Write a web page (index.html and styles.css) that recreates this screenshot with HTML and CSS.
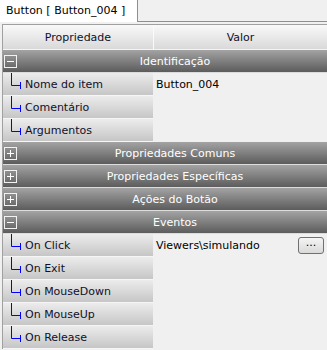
FILE: index.html
```html
<html>
	<head>
		<title>Button [ Button_004 ]</title>
		<link rel="stylesheet" href="styles.css">
	</head>
	<body>
		<div class="tabs">
			<div class="tab">Button [ Button_004 ]</div>
		</div>
		<div class="panel">
			<div class="grid">
				<div class="head">
					<div class="head-name">Propriedade</div>
					<div class="head-val">Valor</div>
				</div>

				<div class="section">
					<svg class="box" width="13" height="13" viewBox="0 0 13 13"><rect x="0.5" y="0.5" width="12" height="12" fill="none" stroke="#f2f2f2"/><path d="M3 6.5H10" stroke="#fff"/></svg>
					<span class="section-label">Identificação</span>
				</div>
				<div class="row">
					<div class="name"><svg class="tree" width="22" height="23" viewBox="0 0 22 23"><path d="M8.5 0V12.5H17M17.5 9V16" fill="none" stroke="#0000ff"/></svg>Nome do item</div>
					<div class="val">Button_004</div>
				</div>
				<div class="row">
					<div class="name"><svg class="tree" width="22" height="23" viewBox="0 0 22 23"><path d="M8.5 0V12.5H17M17.5 9V16" fill="none" stroke="#0000ff"/></svg>Comentário</div>
					<div class="val"></div>
				</div>
				<div class="row">
					<div class="name"><svg class="tree" width="22" height="23" viewBox="0 0 22 23"><path d="M8.5 0V12.5H17M17.5 9V16" fill="none" stroke="#0000ff"/></svg>Argumentos</div>
					<div class="val"></div>
				</div>

				<div class="section">
					<svg class="box" width="13" height="13" viewBox="0 0 13 13"><rect x="0.5" y="0.5" width="12" height="12" fill="none" stroke="#f2f2f2"/><path d="M3 6.5H10M6.5 3V10" stroke="#fff"/></svg>
					<span class="section-label">Propriedades Comuns</span>
				</div>
				<div class="section">
					<svg class="box" width="13" height="13" viewBox="0 0 13 13"><rect x="0.5" y="0.5" width="12" height="12" fill="none" stroke="#f2f2f2"/><path d="M3 6.5H10M6.5 3V10" stroke="#fff"/></svg>
					<span class="section-label">Propriedades Específicas</span>
				</div>
				<div class="section">
					<svg class="box" width="13" height="13" viewBox="0 0 13 13"><rect x="0.5" y="0.5" width="12" height="12" fill="none" stroke="#f2f2f2"/><path d="M3 6.5H10M6.5 3V10" stroke="#fff"/></svg>
					<span class="section-label">Ações do Botão</span>
				</div>

				<div class="section">
					<svg class="box" width="13" height="13" viewBox="0 0 13 13"><rect x="0.5" y="0.5" width="12" height="12" fill="none" stroke="#f2f2f2"/><path d="M3 6.5H10" stroke="#fff"/></svg>
					<span class="section-label">Eventos</span>
				</div>
				<div class="row">
					<div class="name"><svg class="tree" width="22" height="23" viewBox="0 0 22 23"><path d="M8.5 0V12.5H17M17.5 9V16" fill="none" stroke="#0000ff"/></svg>On Click</div>
					<div class="val">Viewers\simulando<button class="more">...</button></div>
				</div>
				<div class="row">
					<div class="name"><svg class="tree" width="22" height="23" viewBox="0 0 22 23"><path d="M8.5 0V12.5H17M17.5 9V16" fill="none" stroke="#0000ff"/></svg>On Exit</div>
					<div class="val"></div>
				</div>
				<div class="row">
					<div class="name"><svg class="tree" width="22" height="23" viewBox="0 0 22 23"><path d="M8.5 0V12.5H17M17.5 9V16" fill="none" stroke="#0000ff"/></svg>On MouseDown</div>
					<div class="val"></div>
				</div>
				<div class="row">
					<div class="name"><svg class="tree" width="22" height="23" viewBox="0 0 22 23"><path d="M8.5 0V12.5H17M17.5 9V16" fill="none" stroke="#0000ff"/></svg>On MouseUp</div>
					<div class="val"></div>
				</div>
				<div class="row">
					<div class="name"><svg class="tree" width="22" height="23" viewBox="0 0 22 23"><path d="M8.5 0V12.5H17M17.5 9V16" fill="none" stroke="#0000ff"/></svg>On Release</div>
					<div class="val"></div>
				</div>
			</div>
		</div>
	</body>
</html>
```

FILE: styles.css
```css
body {
	margin: 0;
	padding: 0;
	background: #f0f0f0;
	font-family: "DejaVu Sans", sans-serif;
	font-size: 11px;
	color: #000;
	overflow: hidden;
}

.tabs {
	display: flex;
	height: 21px;
	border-bottom: 1px solid #8e8f8f;
}

.tab {
	width: 131px;
	height: 22px;
	margin-bottom: -1px;
	padding-left: 6px;
	line-height: 21px;
	background: #fff;
	border-right: 1px solid #8e8f8f;
	color: #000;
}

.panel {
	padding: 2px 0 0 2px;
}

.grid {
	border-top: 1px solid #a0a0a0;
	border-left: 1px solid #a0a0a0;
}

.head {
	display: flex;
	height: 24px;
	border-bottom: 1px solid #f4f4f4;
	background: linear-gradient(#f9f9f9, #d9d9d9);
	color: #10102a;
}

.head-name {
	width: 150px;
	border-right: 1px solid #fafafa;
	text-align: center;
	line-height: 26px;
}

.head-val {
	flex: 1;
	text-align: center;
	line-height: 26px;
}

.section {
	display: flex;
	align-items: center;
	height: 22px;
	border-bottom: 1px solid #dcdcdc;
	background: linear-gradient(#a3a3a3, #5c5c5c);
	color: #fff;
}

.box {
	flex: none;
	margin-left: 1px;
}

.section-label {
	flex: 1;
	padding-left: 6px;
	text-align: center;
}

.row {
	display: flex;
	height: 23px;
}

.name {
	display: flex;
	align-items: center;
	width: 150px;
	height: 22px;
	border-bottom: 1px solid #f6f6f6;
	background: linear-gradient(#ececec, #c6c6c6);
	color: #10102a;
}

.tree {
	flex: none;
	align-self: flex-start;
}

.val {
	flex: 1;
	display: flex;
	align-items: center;
	height: 22px;
	padding-left: 3px;
}

.more {
	width: 26px;
	height: 17px;
	margin-left: auto;
	margin-right: 3px;
	padding: 0 0 4px 0;
	border: 1px solid #707070;
	border-radius: 3px;
	background: linear-gradient(#f4f4f4, #dadada);
	font-family: "DejaVu Sans", sans-serif;
	font-size: 11px;
	line-height: 10px;
	color: #000;
}
```
